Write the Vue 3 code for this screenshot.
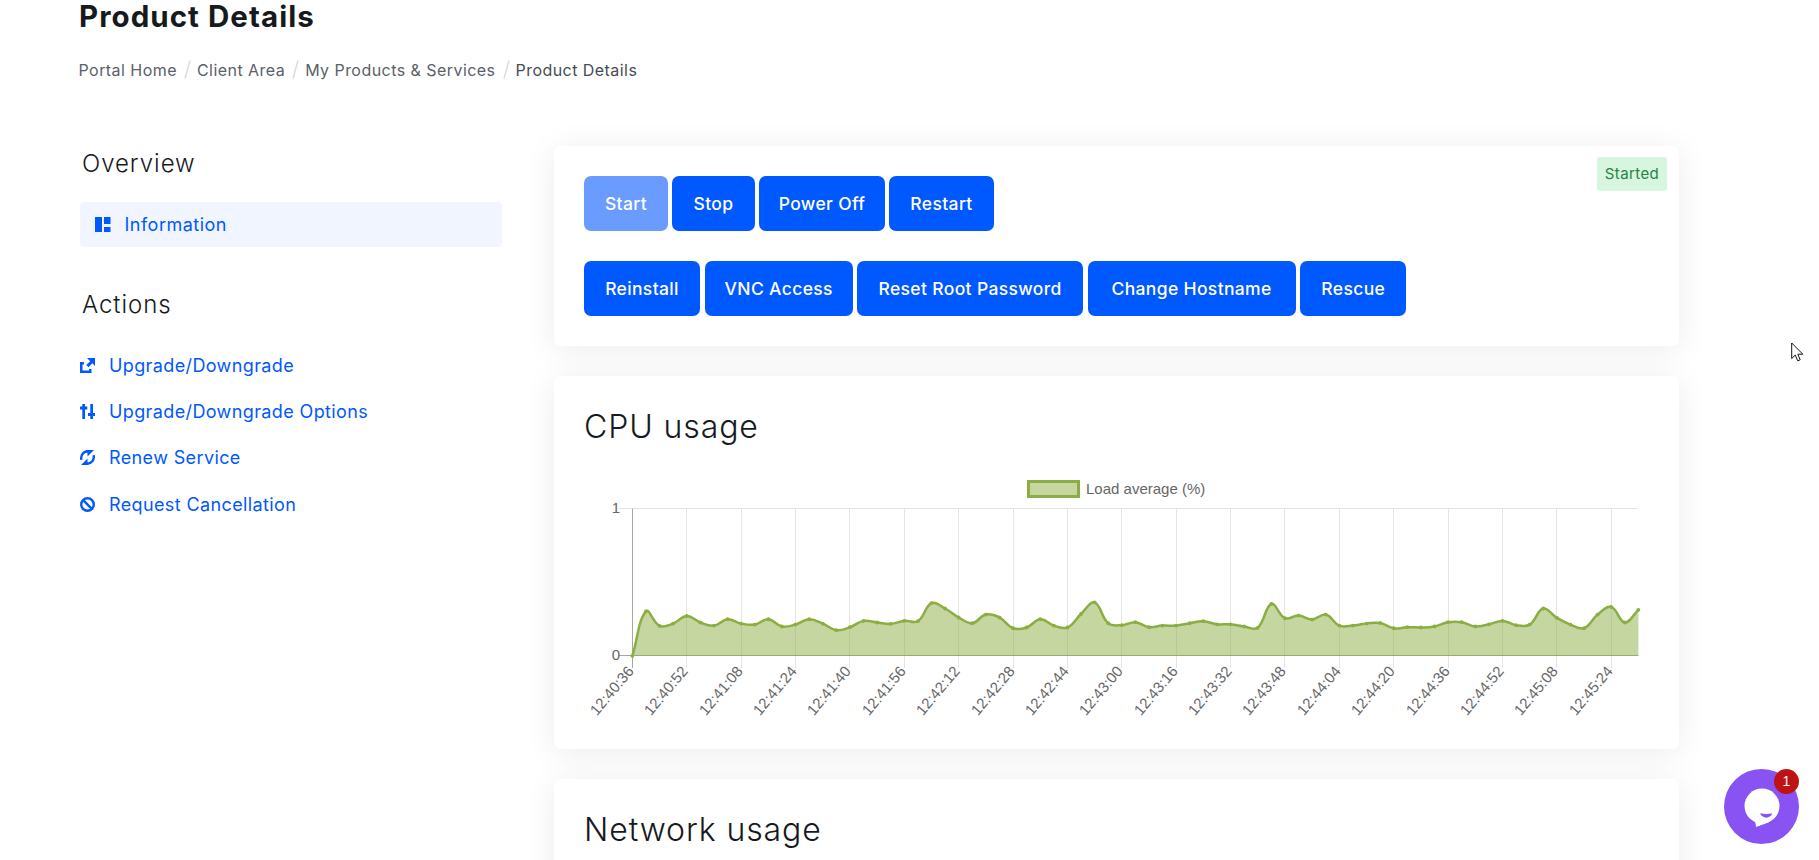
<script setup>
import { ref, computed } from "vue";

const crumbs = ["Portal Home", "Client Area", "My Products & Services"];

const actions = [
  { icon: "external", label: "Upgrade/Downgrade" },
  { icon: "options", label: "Upgrade/Downgrade Options" },
  { icon: "renew", label: "Renew Service" },
  { icon: "cancel", label: "Request Cancellation" },
];

const powerButtons = [
  { label: "Start", width: 84, disabled: true },
  { label: "Stop", width: 83 },
  { label: "Power Off", width: 126 },
  { label: "Restart", width: 105 },
];

const serviceButtons = [
  { label: "Reinstall", width: 116 },
  { label: "VNC Access", width: 148 },
  { label: "Reset Root Password", width: 225.5 },
  { label: "Change Hostname", width: 208 },
  { label: "Rescue", width: 106 },
];

// load average, one sample every 4 seconds
const load = ref([
  0, 0.302, 0.203, 0.219, 0.271, 0.226, 0.205, 0.248, 0.219, 0.212, 0.248,
  0.199, 0.212, 0.248, 0.219, 0.174, 0.194, 0.237, 0.226, 0.217, 0.237, 0.235,
  0.357, 0.321, 0.26, 0.221, 0.28, 0.26, 0.187, 0.192, 0.248, 0.205, 0.192,
  0.284, 0.363, 0.221, 0.208, 0.228, 0.194, 0.205, 0.205, 0.221, 0.235, 0.214,
  0.214, 0.199, 0.19, 0.352, 0.255, 0.273, 0.246, 0.28, 0.205, 0.205, 0.219,
  0.223, 0.187, 0.194, 0.192, 0.199, 0.228, 0.228, 0.199, 0.214, 0.237, 0.208,
  0.212, 0.321, 0.257, 0.212, 0.187, 0.28, 0.332, 0.226, 0.312,
]);

const left = 48.4;
const right = 1054.4;
const top = 36.5;
const bottom = 183.8;
const step = (right - left) / (load.value.length - 1);

const points = computed(() =>
  load.value.map((v, i) => ({
    x: left + i * step,
    y: bottom - v * (bottom - top),
  }))
);

const ticks = computed(() => {
  const start = 12 * 3600 + 40 * 60 + 36;
  const list = [];
  for (let i = 0; i < load.value.length - 1; i += 4) {
    const t = start + i * 4;
    const parts = [t / 3600, (t % 3600) / 60, t % 60];
    list.push({
      x: Math.floor(left + i * step) + 0.5,
      label: parts.map((p) => String(Math.floor(p)).padStart(2, "0")).join(":"),
    });
  }
  return list;
});

// smooth curve through the points
const tension = 0.4;
const line = computed(() => {
  const pts = points.value;
  const handles = pts.map((p, i) => {
    const a = pts[i - 1] || p;
    const b = pts[i + 1] || p;
    const d1 = Math.hypot(p.x - a.x, p.y - a.y);
    const d2 = Math.hypot(b.x - p.x, b.y - p.y);
    const fa = (tension * d1) / (d1 + d2);
    const fb = (tension * d2) / (d1 + d2);
    return {
      px: p.x - fa * (b.x - a.x),
      py: p.y - fa * (b.y - a.y),
      nx: p.x + fb * (b.x - a.x),
      ny: p.y + fb * (b.y - a.y),
    };
  });
  let d = `M${pts[0].x},${pts[0].y}`;
  for (let i = 1; i < pts.length; i++) {
    const h = handles[i - 1];
    const k = handles[i];
    d += `C${h.nx},${h.ny} ${k.px},${k.py} ${pts[i].x},${pts[i].y}`;
  }
  return d;
});

const area = computed(() => `${line.value}L${right},${bottom}L${left},${bottom}Z`);
</script>

<template>
  <div class="page">
    <h1>Product Details</h1>
    <nav class="breadcrumb">
      <template v-for="crumb in crumbs" :key="crumb">
        <a>{{ crumb }}</a>
        <svg class="slash" width="7" height="19" viewBox="0 0 7 19">
          <path d="M6 .5 1 18.5" stroke="#d9dde2" stroke-width="1.5" />
        </svg>
      </template>
      <span class="current">Product Details</span>
    </nav>

    <div class="columns">
      <aside>
        <h3>Overview</h3>
        <a class="info">
          <svg width="16" height="15" viewBox="0 0 16 15" fill="#0058ff">
            <path d="M0 0h7v15H0zM9 0h6.500v7H9zM9 10h6.500v5H9z" />
          </svg>
          <span>Information</span>
        </a>
        <h3 class="actionsTitle">Actions</h3>
        <ul class="actions">
          <li v-for="item in actions" :key="item.label">
            <svg width="15" height="15" viewBox="0 0 15 15">
              <g v-if="item.icon === 'external'" fill="#0058ff">
                <path d="M0 4h4v2.500H2.500v6h6.500V11h2.500v4H0z" />
                <path d="M7 0h8v8l-2.700-2.700-3.800 3.900-2.200-2.200 3.900-3.800z" />
              </g>
              <g v-else-if="item.icon === 'options'" fill="#0058ff">
                <path d="M2.300 0h2.700v2.500h2.300v3H5V15H2.300V5.500H0v-3h2.300z" />
                <path d="M10.300 0H13v9h2v3h-2v3h-2.700v-3H8V9h2.300z" />
              </g>
              <g v-else-if="item.icon === 'renew'">
                <path d="M1.300 9.800C.6 5 3.500 1.300 8 1.300M13.700 5.200c.7 4.800-2.200 8.500-6.700 8.500" fill="none" stroke="#0058ff" stroke-width="2.400" />
                <path d="M6.500 0H14L7.500 6.500V3.500zM8.500 15H1l6.500-6.500v3z" fill="#0058ff" />
              </g>
              <g v-else fill="none" stroke="#0058ff" stroke-width="2.400">
                <circle cx="7.500" cy="7.500" r="6.300" />
                <path d="M3.200 3.200l8.600 8.600" />
              </g>
            </svg>
            <a>{{ item.label }}</a>
          </li>
        </ul>
      </aside>

      <main>
        <section class="card controls">
          <span class="status">Started</span>
          <div class="buttons">
            <button
              v-for="b in powerButtons"
              :key="b.label"
              :disabled="b.disabled"
              :style="{ width: b.width + 'px' }"
            >
              {{ b.label }}
            </button>
          </div>
          <div class="buttons service">
            <button
              v-for="b in serviceButtons"
              :key="b.label"
              :style="{ width: b.width + 'px' }"
            >
              {{ b.label }}
            </button>
          </div>
        </section>

        <section class="card cpu">
          <h2>CPU usage</h2>
          <svg class="chart" width="1065" height="260" viewBox="0 0 1065 260">
            <rect x="444.500" y="9.500" width="50" height="15" fill="#c5d6a0" stroke="#8bae42" stroke-width="3" />
            <text x="502" y="21.500">Load average (%)</text>
            <path :d="`M35 ${top}H${right}`" class="grid" />
            <path
              v-for="(t, i) in ticks"
              :key="t.label"
              :d="`M${t.x} ${top}V196`"
              :class="i ? 'grid' : 'grid axis'"
            />
            <path :d="`M35 183.500H${right}`" class="grid axis" />
            <path :d="area" class="area" />
            <path :d="line" class="line" />
            <circle v-for="(p, i) in points" :key="i" :cx="p.x" :cy="p.y" r="1.900" fill="#8bae42" />
            <text x="36" y="41" text-anchor="end">1</text>
            <text x="36" y="188" text-anchor="end">0</text>
            <text
              v-for="t in ticks"
              :key="t.label"
              :transform="`translate(${t.x + 2} 199.5) rotate(-50)`"
              text-anchor="end"
            >
              {{ t.label }}
            </text>
          </svg>
        </section>

        <section class="card network">
          <h2>Network usage</h2>
        </section>
      </main>
    </div>

    <button class="chat">
      <svg width="75" height="75" viewBox="0 0 75 75">
        <circle cx="38" cy="37" r="17.500" fill="#fff" />
        <path d="M30.500 50l1.700 8 12-4.500 6-7z" fill="#fff" />
        <path d="M36 44.300c4.500 1 8 1 12.300 0-1.800 5.700-9.800 6-12.300 0z" fill="#8952f2" />
      </svg>
      <span class="unread">1</span>
    </button>

    <svg class="cursor" width="13" height="21" viewBox="0 0 13 21">
      <path d="M.7 1v15.500l3.600-3.400 2.400 5.700 2.500-1-2.400-5.600h5z" fill="#fff" stroke="#111" stroke-width="1" />
    </svg>
  </div>
</template>

<style>
body {
  background: #fff;
  overflow: hidden;
}
</style>

<style scoped>
.page {
  position: relative;
  box-sizing: border-box;
  height: 860px;
  padding-left: 79px;
  overflow: hidden;
  font-family: Inter, "Open Sans", sans-serif;
  color: #16191d;
}

h1,
h2,
h3 {
  margin: 0;
}

h1 {
  height: 52px;
  line-height: 33px;
  font-size: 29.500px;
  font-weight: 700;
  letter-spacing: 1.050px;
}

.breadcrumb {
  display: flex;
  align-items: center;
  height: 36px;
  margin-left: -0.500px;
  font-size: 16px;
  letter-spacing: 0.450px;
  color: #5a6068;
}

.slash {
  margin: 0 6px 0 7px;
  position: relative;
  top: -1px;
}

.current {
  color: #464c54;
}

.columns {
  display: flex;
  gap: 52px;
  margin-top: 58px;
}

aside {
  width: 422px;
  padding-left: 1px;
  box-sizing: content-box;
}

h3 {
  padding-left: 2px;
  font-size: 24px;
  font-weight: 300;
  line-height: 36px;
  letter-spacing: 0.950px;
}

.info {
  display: flex;
  align-items: center;
  gap: 13.500px;
  height: 45px;
  margin-top: 20px;
  padding-left: 15px;
  border-radius: 4px;
  background: #f0f5ff;
  color: #0058ff;
  font-size: 18px;
  letter-spacing: 0.500px;
}

.actionsTitle {
  margin-top: 40px;
}

.actions {
  margin: 19px 0 0;
  padding: 0;
  list-style: none;
}

.actions li {
  display: flex;
  align-items: center;
  gap: 14px;
  height: 46.400px;
  color: #0058ff;
  font-size: 18px;
  letter-spacing: 0.380px;
}

main {
  width: 1125px;
}

.card {
  position: relative;
  box-sizing: border-box;
  margin-bottom: 30px;
  padding: 30px;
  border-radius: 7px;
  background: #fff;
  box-shadow: 0 4px 32px rgb(0 0 0 / 8%);
}

.controls {
  height: 200px;
}

.status {
  position: absolute;
  top: 11px;
  right: 12px;
  width: 70px;
  height: 34px;
  line-height: 34px;
  border-radius: 3px;
  background: #d7f5df;
  color: #28843f;
  font-size: 15px;
  letter-spacing: 0.400px;
  text-align: center;
}

.buttons {
  display: flex;
  gap: 4px;
  margin-bottom: 30px;
}

.service {
  gap: 4.700px;
}

.buttons button {
  height: 55px;
  padding: 0;
  border: none;
  border-radius: 7px;
  background: #0058ff;
  color: #fff;
  font-family: inherit;
  font-size: 17.500px;
  font-weight: 500;
  letter-spacing: 0.350px;
  white-space: nowrap;
}

.buttons button:disabled {
  background: #6a9bff;
}

.cpu {
  height: 373px;
}

h2 {
  font-size: 32px;
  font-weight: 300;
  line-height: 42px;
  letter-spacing: 0.900px;
}

.chart {
  display: block;
  margin-top: 24px;
}

.chart text {
  font-family: "Liberation Sans", Arial, sans-serif;
  font-size: 15px;
  fill: #666;
}

.grid {
  fill: none;
  stroke: #e4e4e4;
}

.axis {
  stroke: #a6a6a6;
}

.area {
  fill: rgb(139 174 66 / 50%);
}

.line {
  fill: none;
  stroke: #8bae42;
  stroke-width: 2.500;
}

.network {
  height: 373px;
}

.chat {
  position: absolute;
  left: 1724px;
  top: 769px;
  width: 75px;
  height: 75px;
  padding: 0;
  border: none;
  border-radius: 50%;
  background: #8952f2;
}

.chat svg {
  display: block;
}

.unread {
  position: absolute;
  top: 0;
  right: 0;
  width: 25px;
  height: 25px;
  line-height: 25px;
  border-radius: 50%;
  background: #bd1313;
  color: #fff;
  font-family: "Liberation Sans", Arial, sans-serif;
  font-size: 14px;
}

.cursor {
  position: absolute;
  left: 1791px;
  top: 342px;
}
</style>
